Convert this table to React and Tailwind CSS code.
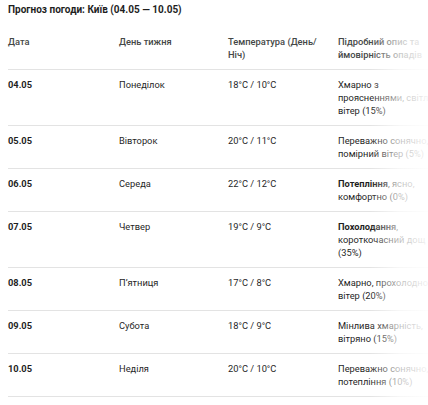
import React from 'react'

const rows = [
  { date: '04.05', day: 'Понеділок', temp: '18°C / 10°C', desc: <>Хмарно з проясненнями, світлий вітер (15%)</> },
  { date: '05.05', day: 'Вівторок', temp: '20°C / 11°C', desc: <>Переважно сонячно, помірний вітер (5%)</> },
  { date: '06.05', day: 'Середа', temp: '22°C / 12°C', desc: <><b className="font-bold">Потепління</b>, ясно, комфортно (0%)</> },
  { date: '07.05', day: 'Четвер', temp: '19°C / 9°C', desc: <><b className="font-bold">Похолодання</b>, короткочасний дощ (35%)</> },
  { date: '08.05', day: 'Пʼятниця', temp: '17°C / 8°C', desc: <>Хмарно, прохолодно, вітер (20%)</> },
  { date: '09.05', day: 'Субота', temp: '18°C / 9°C', desc: <>Мінлива хмарність, вітряно (15%)</> },
  { date: '10.05', day: 'Неділя', temp: '20°C / 10°C', desc: <>Переважно сонячно, потепління (10%)</> },
]

const App = () => {
  return (
    <div className="w-[428px] h-[405px] bg-white overflow-hidden px-2 text-[#1f1f1f]" style={{ fontFamily: 'Roboto, "Noto Sans", sans-serif' }}>
      <div className="pt-[3px] mb-[10px] text-[10px] leading-[14px] font-bold">
        Прогноз погоди: Київ (04.05 — 10.05)
      </div>
      <div className="relative">
        <table className="table-fixed border-collapse w-[560px] text-[9.3px] leading-[13px]">
          <colgroup>
            <col className="w-[111px]" />
            <col className="w-[109px]" />
            <col className="w-[110px]" />
            <col className="w-[230px]" />
          </colgroup>
          <thead>
            <tr className="border-b border-[#e3e3e3] text-left align-top text-[#444746]">
              <th className="py-2 pr-3 font-medium">Дата</th>
              <th className="py-2 pr-3 font-medium">День тижня</th>
              <th className="py-2 pr-3 font-medium">Температура (День/ Ніч)</th>
              <th className="py-2 pr-[126px] font-medium">Підробний опис та ймовірність опадів</th>
            </tr>
          </thead>
          <tbody>
            {rows.map((r) => (
              <tr key={r.date} className="border-b border-[#e3e3e3] align-top">
                <td className="py-2 pr-3 font-bold">{r.date}</td>
                <td className="py-2 pr-3">{r.day}</td>
                <td className="py-2 pr-3">{r.temp}</td>
                <td className="py-2 pr-[126px]">{r.desc}</td>
              </tr>
            ))}
          </tbody>
        </table>
        <div className="absolute top-0 bottom-0 left-[362px] w-[58px] bg-gradient-to-r from-white/0 via-white/70 to-white/95" />
      </div>
    </div>
  )
}

export default App
